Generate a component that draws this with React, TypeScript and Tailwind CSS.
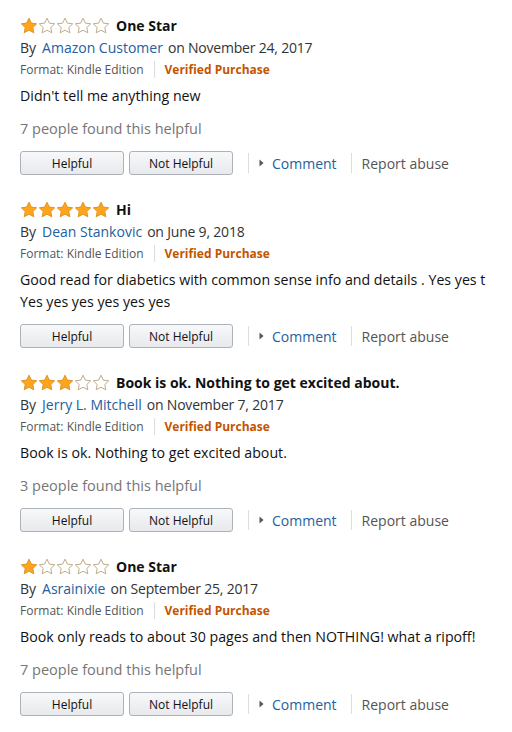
import React from "react";

type Review = {
  rating: number;
  title: string;
  author: string;
  date: string;
  body: string[];
  helpful?: string;
};

const reviews: Review[] = [
  {
    rating: 1,
    title: "One Star",
    author: "Amazon Customer",
    date: "November 24, 2017",
    body: ["Didn't tell me anything new"],
    helpful: "7 people found this helpful",
  },
  {
    rating: 5,
    title: "Hi",
    author: "Dean Stankovic",
    date: "June 9, 2018",
    body: [
      "Good read for diabetics with common sense info and details . Yes yes t",
      "Yes yes yes yes yes yes",
    ],
  },
  {
    rating: 3,
    title: "Book is ok. Nothing to get excited about.",
    author: "Jerry L. Mitchell",
    date: "November 7, 2017",
    body: ["Book is ok. Nothing to get excited about."],
    helpful: "3 people found this helpful",
  },
  {
    rating: 1,
    title: "One Star",
    author: "Asrainixie",
    date: "September 25, 2017",
    body: ["Book only reads to about 30 pages and then NOTHING! what a ripoff!"],
    helpful: "7 people found this helpful",
  },
];

const STAR = "M9 1.2l2.35 4.9 5.35.7-3.9 3.7 1 5.3L9 13.2l-4.8 2.6 1-5.3-3.9-3.7 5.35-.7z";

function Stars({ rating }: { rating: number }) {
  return (
    <div className="flex">
      {[0, 1, 2, 3, 4].map((i) => (
        <svg key={i} width="18" height="17" viewBox="0 0 18 17">
          {i < rating ? (
            <path d={STAR} fill="#ffa41c" stroke="#d9901a" strokeWidth="0.9" strokeLinejoin="round" />
          ) : (
            <path d={STAR} fill="#ffffff" stroke="#b9a27c" strokeWidth="0.9" strokeLinejoin="round" />
          )}
        </svg>
      ))}
    </div>
  );
}

function ReviewItem({ r }: { r: Review }) {
  return (
    <div className="flex flex-col">
      <div className="flex items-center h-[22px] gap-[6px]">
        <Stars rating={r.rating} />
        <span className="text-[14px] font-bold text-[#111]">{r.title}</span>
      </div>
      <div className="h-[22px] flex items-center text-[14px] text-[#333]">
        By<span className="ml-[6px] text-[#23609e]">{r.author}</span>
        <span className="ml-[5px] tracking-[-0.2px]">on {r.date}</span>
      </div>
      <div className="h-[23px] flex items-center text-[12px]">
        <span className="text-[#555]">Format: Kindle Edition</span>
        <span className="mx-[10px] w-px h-[17px] bg-[#ddd]" />
        <span className="font-bold text-[#c45500]">Verified Purchase</span>
      </div>
      <div className="mt-[4px] text-[14.2px] leading-[22px] text-[#111]">
        {r.body.map((line, i) => (
          <div key={i} className="whitespace-nowrap">{line}</div>
        ))}
      </div>
      {r.helpful && (
        <div className="mt-[11px] h-[22px] flex items-center text-[14.5px] text-[#767676]">{r.helpful}</div>
      )}
      <div className="mt-[11px] flex items-center">
        <button className="w-[104px] h-[24px] pt-px rounded-[3px] border border-[#adb1b8] bg-gradient-to-b from-[#f7f8fa] to-[#e7e9ec] text-[12px] text-[#111]">
          Helpful
        </button>
        <button className="ml-[5px] w-[104px] h-[24px] pt-px rounded-[3px] border border-[#adb1b8] bg-gradient-to-b from-[#f7f8fa] to-[#e7e9ec] text-[12px] text-[#111]">
          Not Helpful
        </button>
        <span className="ml-[15px] w-px h-[20px] bg-[#ddd]" />
        <svg className="ml-[10px]" width="5" height="8" viewBox="0 0 5 8">
          <path d="M0.5 0.5L4.5 4L0.5 7.5z" fill="#555" />
        </svg>
        <span className="ml-[8px] text-[14px] text-[#23609e]">Comment</span>
        <span className="ml-[14px] w-px h-[20px] bg-[#ddd]" />
        <span className="ml-[10px] text-[14px] text-[#555]">Report abuse</span>
      </div>
    </div>
  );
}

export default function App() {
  return (
    <div
      className="w-[512px] h-[732px] bg-white pl-[20px] pt-[14px] flex flex-col gap-[23px] overflow-hidden"
      style={{ fontFamily: '"Open Sans", "Noto Sans", Arial, sans-serif' }}
    >
      {reviews.map((r, i) => (
        <ReviewItem key={i} r={r} />
      ))}
    </div>
  );
}
